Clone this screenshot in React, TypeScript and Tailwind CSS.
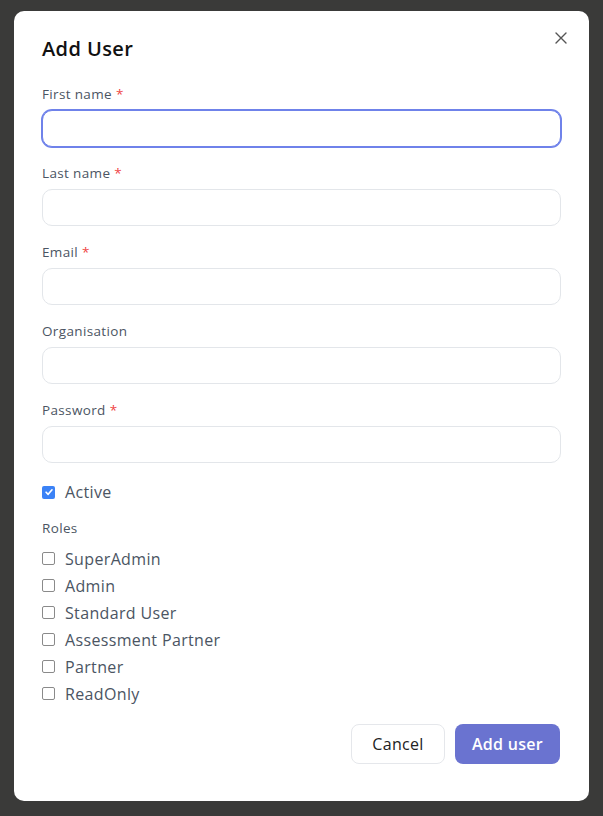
import React from "react";

const font = { fontFamily: '"Open Sans", "Noto Sans", sans-serif' };

function Field({ label, required, focused }: { label: string; required?: boolean; focused?: boolean }) {
  return (
    <div className="flex flex-col">
      <label className="text-[13.5px] leading-[18px] font-medium tracking-[0.35px] text-[#4b5563]">
        {label}
        {required && <span className="ml-[4px] text-[#ef4444]">*</span>}
      </label>
      <div
        className={
          "mt-[7px] h-[37px] rounded-[10px] bg-white " +
          (focused ? "border border-[#6f82ea] ring-1 ring-[#6f82ea]" : "border border-[#e3e6ea]")
        }
      />
    </div>
  );
}

function Box({ checked }: { checked?: boolean }) {
  return checked ? (
    <span className="flex h-[13px] w-[13px] items-center justify-center rounded-[2px] bg-[#3b82f6]">
      <svg viewBox="0 0 12 12" className="h-[10px] w-[10px]" fill="none" stroke="white" strokeWidth="2" strokeLinecap="round" strokeLinejoin="round">
        <path d="M2.5 6.3 L5 8.8 L9.6 3.4" />
      </svg>
    </span>
  ) : (
    <span className="h-[13px] w-[13px] rounded-[2px] border border-[#8a8a8a] bg-white" />
  );
}

export default function App() {
  const roles = ["SuperAdmin", "Admin", "Standard User", "Assessment Partner", "Partner", "ReadOnly"];
  return (
    <div className="min-h-[816px] w-full bg-[#3a3a39] pt-[11px] pl-[14px]" style={font}>
      <div className="relative w-[575px] h-[790px] rounded-[10px] bg-white px-[28px] pt-[25px]">
        <button className="absolute right-[22px] top-[21px] text-[#555]">
          <svg viewBox="0 0 12 12" className="h-[12px] w-[12px]" fill="none" stroke="currentColor" strokeWidth="1.4" strokeLinecap="round">
            <path d="M1 1 L11 11 M11 1 L1 11" />
          </svg>
        </button>
        <h2 className="text-[20px] leading-[26px] font-semibold tracking-[0.4px] text-[#111]">Add User</h2>
        <div className="mt-[23px] flex flex-col gap-[17px]">
          <Field label="First name" required focused />
          <Field label="Last name" required />
          <Field label="Email" required />
          <Field label="Organisation" />
          <Field label="Password" required />
        </div>
        <div className="mt-[19px] flex items-center gap-[10px]">
          <Box checked />
          <span className="text-[16px] leading-[20px] tracking-[0.35px] text-[#4b5563]">Active</span>
        </div>
        <div className="mt-[17px] text-[13.5px] leading-[18px] font-medium tracking-[0.35px] text-[#4b5563]">Roles</div>
        <div className="mt-[8px] flex flex-col">
          {roles.map((r) => (
            <div key={r} className="flex h-[27px] items-center gap-[10px]">
              <Box />
              <span className="text-[16px] leading-[20px] tracking-[0.35px] text-[#4b5563]">{r}</span>
            </div>
          ))}
        </div>
        <div className="mt-[17px] flex justify-end gap-[10px] pr-[1px]">
          <button className="h-[40px] w-[94px] rounded-[8px] border border-[#e5e7eb] bg-white text-[16px] font-medium tracking-[0.3px] text-[#222]">
            Cancel
          </button>
          <button className="h-[40px] w-[105px] rounded-[8px] bg-[#6a73d0] text-[16px] font-semibold tracking-[0.3px] text-white">
            Add user
          </button>
        </div>
      </div>
    </div>
  );
}
